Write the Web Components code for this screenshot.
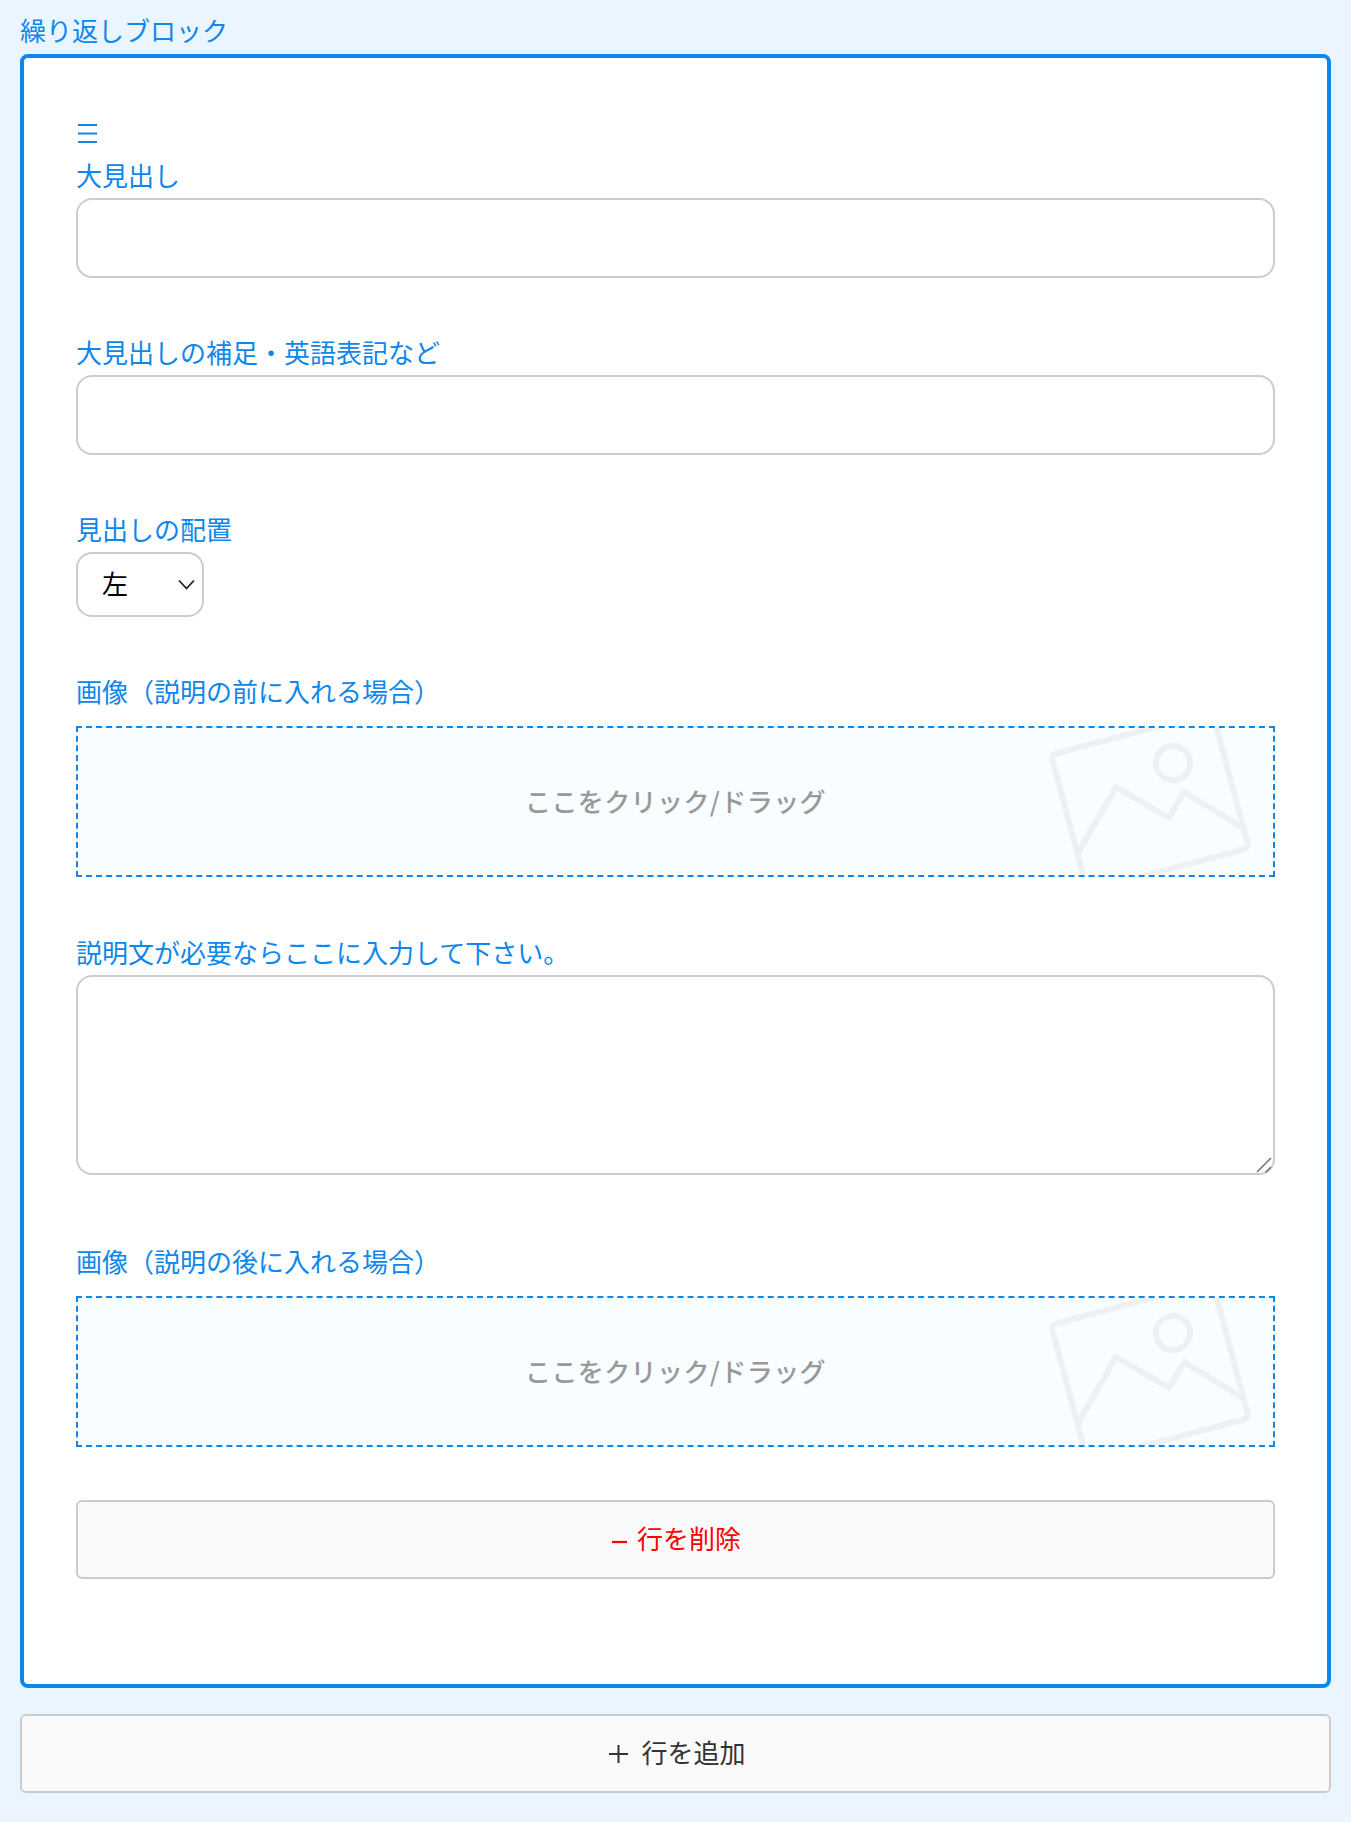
<!DOCTYPE html>
<html lang="ja">
<head>
<meta charset="utf-8">
<title>繰り返しブロック</title>
<style>
  html, body { margin: 0; background: #eaf5ff; }
  body { font: 26px/39px "Noto Sans CJK JP", "Noto Sans", sans-serif; color: #0d87ec; }
</style>
</head>
<body>
<repeat-block title-text="繰り返しブロック">
  <drag-handle></drag-handle>
  <text-field label="大見出し"></text-field>
  <text-field label="大見出しの補足・英語表記など"></text-field>
  <select-field label="見出しの配置" value="左"></select-field>
  <image-drop label="画像（説明の前に入れる場合）"></image-drop>
  <area-field label="説明文が必要ならここに入力して下さい。"></area-field>
  <image-drop last label="画像（説明の後に入れる場合）"></image-drop>
  <action-button kind="remove">行を削除</action-button>
  <action-button slot="footer" kind="add">行を追加</action-button>
</repeat-block>

<script>
const define = (name, css, html, attrs = {}) => {
  customElements.define(name, class extends HTMLElement {
    constructor() {
      super();
      const root = this.attachShadow({ mode: "open" });
      root.innerHTML = `<style>${css}</style>${html}`;
    }
    connectedCallback() {
      for (const key in attrs) {
        const el = this.shadowRoot.querySelector(attrs[key]);
        if (el) el.textContent = this.getAttribute(key) || "";
      }
    }
  });
};

define("repeat-block", `
  :host { display: block; padding: 10px 20px 29px; }
  .title { display: block; height: 44px; line-height: 40px; }
  .card {
    box-sizing: border-box;
    height: 1634px;
    border: 4px solid #0d87ec;
    border-radius: 8px;
    background: #fff;
    padding: 52px 52px 0;
  }
  .footer { margin-top: 26px; }
`, `
  <span class="title"></span>
  <div class="card"><slot></slot></div>
  <div class="footer"><slot name="footer"></slot></div>
`, { "title-text": ".title" });

define("drag-handle", `
  :host { display: block; height: 49px; }
  svg { display: block; margin-left: 2px; }
`, `<svg width="19" height="33" viewBox="0 0 19 33" role="img" aria-label="☰"><path d="M0 15h19M0 23.5h19M0 32h19" stroke="#0d87ec" stroke-width="2"/></svg>`);

const fieldCss = `
  :host { display: block; margin-bottom: 58px; }
  label { display: block; height: 39px; line-height: 32px; }
  input, textarea, select {
    display: block;
    box-sizing: border-box;
    width: 100%;
    margin: 0;
    border: 2px solid #ccc;
    border-radius: 16px;
    background: #fff;
    font: inherit;
    color: #000;
    outline: none;
  }
`;

define("text-field", fieldCss + `
  input { height: 80px; padding: 0 24px; }
`, `<label></label><input type="text">`, { label: "label" });

define("area-field", fieldCss + `
  :host { margin-bottom: 70px; }
  .wrap { position: relative; }
  textarea { height: 200px; padding: 12px 24px; resize: none; }
  svg { position: absolute; right: 3px; bottom: 2px; pointer-events: none; }
`, `
  <label></label>
  <div class="wrap">
    <textarea></textarea>
    <svg width="16" height="16" viewBox="0 0 16 16"><path d="M1 15L15 1M9.500 15.500L15 10" stroke="#777" stroke-width="1.600" fill="none"/></svg>
  </div>
`, { label: "label" });

define("select-field", fieldCss + `
  .wrap { position: relative; width: 128px; height: 65px; }
  select { height: 65px; padding: 0 24px 4px; appearance: none; -webkit-appearance: none; }
  svg { position: absolute; left: 102px; top: 27px; pointer-events: none; }
`, `
  <label></label>
  <div class="wrap">
    <select><option class="opt"></option></select>
    <svg width="17" height="11" viewBox="0 0 17 11"><path d="M1 1.500l7.500 8 7.500-8" fill="none" stroke="#222" stroke-width="1.800"/></svg>
  </div>
`, { label: "label", value: ".opt" });

define("image-drop", `
  :host { display: block; margin-bottom: 59px; }
  :host([last]) { margin-bottom: 53px; }
  label { display: block; height: 39px; margin-bottom: 12px; line-height: 32px; }
  .zone {
    position: relative;
    box-sizing: border-box;
    height: 151px;
    display: flex;
    align-items: center;
    justify-content: center;
    overflow: hidden;
    border: 2px dashed #0d87ec;
    background: #f8fdff;
    color: #999;
    font-weight: 500;
  }
  svg { position: absolute; right: 0; top: -1px; }
  span { position: relative; letter-spacing: .4px; margin-bottom: 3px; }
`, `
  <label></label>
  <div class="zone">
    <svg width="248" height="150" viewBox="0 0 248 150" fill="none" stroke="#eff0f2" stroke-width="6" stroke-linejoin="round" stroke-linecap="round">
      <rect x="26" y="28" width="167" height="141" rx="5" transform="rotate(-15 26 28)"/>
      <path d="M53 126L91 60l53 31 15-26 59 36"/>
      <circle cx="148" cy="36" r="17"/>
    </svg>
    <span>ここをクリック/ドラッグ</span>
  </div>
`, { label: "label" });

define("action-button", `
  :host { display: block; }
  button {
    display: flex;
    align-items: center;
    justify-content: center;
    box-sizing: border-box;
    width: 100%;
    height: 79px;
    margin: 0;
    padding: 0;
    border: 2px solid #ccc;
    border-radius: 6px;
    background: #fafafa;
    color: #333;
    font: inherit;
  }
  :host([kind="remove"]) button { color: #f00; padding-left: 2px; }
  :host([kind="add"]) button { padding-left: 4px; }
  svg { flex: none; margin-right: 10px; }
  :host([kind="add"]) svg { margin-right: 13px; }
  span { margin-bottom: 4px; }
`, `<button type="button"><svg width="19" height="20" viewBox="0 0 19 20"></svg><span><slot></slot></span></button>`);

document.querySelectorAll("action-button").forEach((btn) => {
  const svg = btn.shadowRoot.querySelector("svg");
  if (btn.getAttribute("kind") === "add") {
    svg.innerHTML = '<path d="M9.500 1v18M0 10h19" stroke="#333" stroke-width="2"/>';
  } else {
    svg.setAttribute("width", "15");
    svg.setAttribute("viewBox", "0 0 15 20");
    svg.innerHTML = '<path d="M0 12h15" stroke="#f00" stroke-width="2.200"/>';
  }
});
</script>
</body>
</html>
